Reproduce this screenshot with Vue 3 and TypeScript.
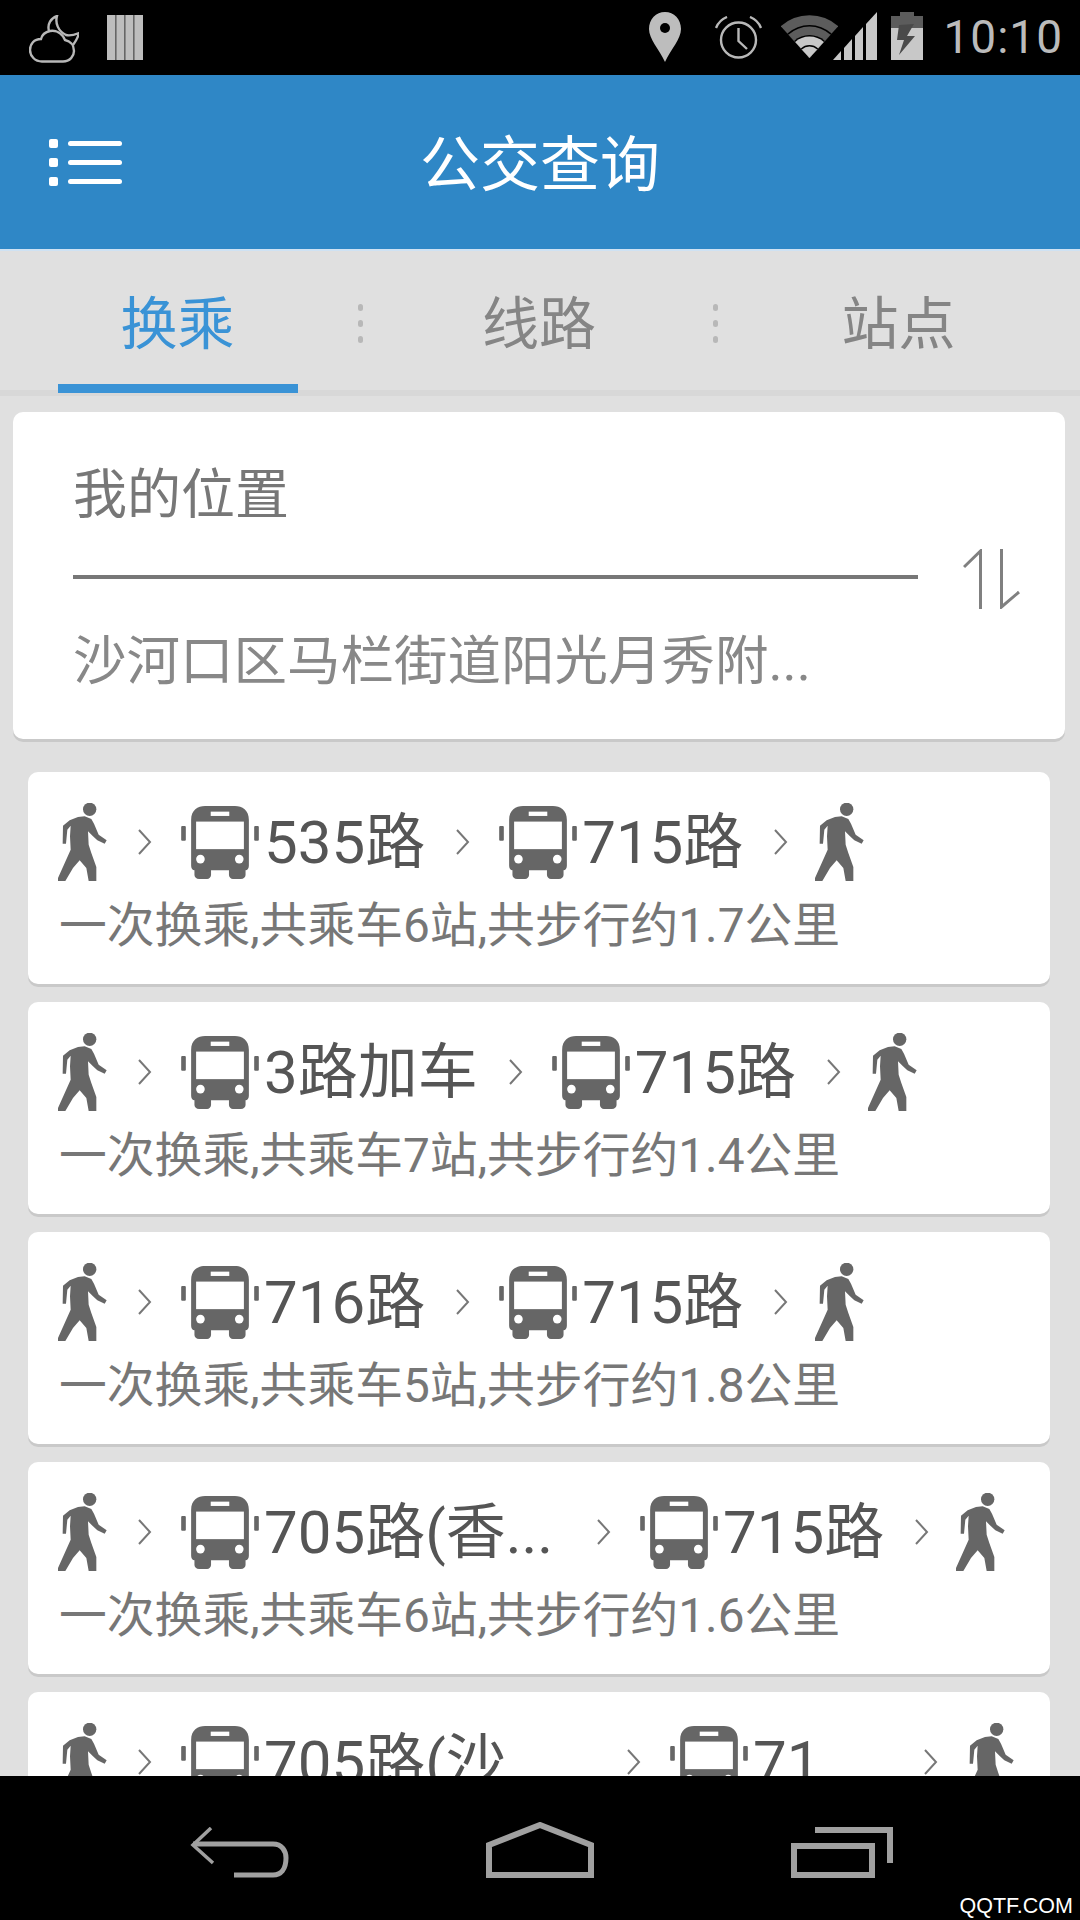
<script setup lang="ts">
type Step = { name: string; width?: number };
type Route = { steps: Step[]; info: string };

const tabs = ['换乘', '线路', '站点'];

const routes: Route[] = [
  { steps: [{ name: '535路' }, { name: '715路' }], info: '一次换乘,共乘车6站,共步行约1.7公里' },
  { steps: [{ name: '3路加车' }, { name: '715路' }], info: '一次换乘,共乘车7站,共步行约1.4公里' },
  { steps: [{ name: '716路' }, { name: '715路' }], info: '一次换乘,共乘车5站,共步行约1.8公里' },
  { steps: [{ name: '705路(香...', width: 302 }, { name: '715路' }], info: '一次换乘,共乘车6站,共步行约1.6公里' },
  { steps: [{ name: '705路(沙', width: 332 }, { name: '71', width: 140 }], info: '一次换乘,共乘车6站,共步行约1.6公里' },
];
</script>

<template>
  <div class="screen">
    <div class="status">
      <svg class="st-cloud" width="50" height="48" viewBox="0 0 50 48" fill="none" stroke="#b8b8b8" stroke-width="2.4">
        <path d="M13 46.5H34C41 46.5 45 41 45 36C45 30 41 26 36 25C33 18 27 15 21 16C16 17 13 20 12 24C5 24 1 29 1 35C1 41 6 46.5 13 46.5Z" />
        <path d="M20 16C18 9 22 3 28 1C26 8 29 16 37 20C41 21 45 20 50 18C49 23 47 26 44 30" />
      </svg>
      <svg class="st-bars" width="36" height="45" viewBox="0 0 36 45">
        <rect width="36" height="45" fill="#bdbdbd" />
        <rect x="8" width="1.6" height="45" fill="#666" />
        <rect x="17" width="1.6" height="45" fill="#666" />
        <rect x="26" width="1.6" height="45" fill="#666" />
      </svg>
      <span class="st-fill"></span>
      <svg class="st-pin" width="32" height="50" viewBox="0 0 32 50">
        <path d="M16 0C7 0 0 7 0 17C0 27 10 37 16 50C22 37 32 27 32 17C32 7 25 0 16 0Z" fill="#bdbdbd" />
        <circle cx="16" cy="16" r="5" fill="#000" />
      </svg>
      <svg class="st-alarm" width="47" height="43" viewBox="0 0 47 43" fill="none" stroke="#b8b8b8" stroke-width="2.4">
        <circle cx="23.5" cy="24" r="17.5" />
        <path d="M23.5 12V25L32 33" />
        <path d="M1 12C3 7 7 3 12 1M46 12C44 7 40 3 35 1" />
      </svg>
      <svg class="st-wifi" width="57" height="43" viewBox="0 0 57 43">
        <path d="M28.5 43L-.3 11.2A43 43 0 0 1 57.3 11.2Z" fill="#5c5c5c" />
        <path d="M28.5 43L6.4 18.6A33 33 0 0 1 50.6 18.6Z" fill="#000" />
        <path d="M28.5 43L7.4 19.7A31.5 31.5 0 0 1 49.6 19.7Z" fill="#5c5c5c" />
        <path d="M28.5 43L13.1 26A23 23 0 0 1 43.9 26Z" fill="#000" />
        <path d="M28.5 43L14.1 27.1A21.5 21.5 0 0 1 42.9 27.1Z" fill="#c8c8c8" />
        <path d="M28.5 43L19.8 33.4A13 13 0 0 1 37.2 33.4Z" fill="#000" />
        <path d="M28.5 43L20.8 34.5A11.5 11.5 0 0 1 36.2 34.5Z" fill="#c8c8c8" />
      </svg>
      <svg class="st-signal" width="44" height="48" viewBox="0 0 44 48" fill="#c8c8c8">
        <polygon points="0,48 8,39 8,48" />
        <polygon points="11,48 11,36 19,27 19,48" />
        <polygon points="22,48 22,24 30,15 30,48" />
        <polygon points="33,48 33,12 44,0 44,48" />
      </svg>
      <svg class="st-batt" width="32" height="48" viewBox="0 0 32 48">
        <rect x="9" width="14" height="5" fill="#5c5c5c" />
        <rect y="4" width="32" height="12" fill="#5c5c5c" />
        <rect y="16" width="32" height="32" fill="#c8c8c8" />
        <polygon points="8,13 23,12 16,24 24,24 8,43 13,28 6,28" fill="#4a4a4a" />
      </svg>
      <span class="st-time">10:10</span>
    </div>

    <div class="appbar">
      <div class="menu">
        <div class="menu-row" v-for="n in 3" :key="n"><i></i><b></b></div>
      </div>
      <h1>公交查询</h1>
    </div>

    <div class="tabs">
      <template v-for="(tab, i) in tabs" :key="tab">
        <div class="tab" :class="{ active: i === 0 }">
          <span>{{ tab }}</span>
          <em></em>
        </div>
        <div class="sep" v-if="i < 2"><i></i><i></i><i></i></div>
      </template>
    </div>

    <div class="content">
      <div class="search">
        <div class="fields">
          <div class="field first">我的位置</div>
          <div class="field">沙河口区马栏街道阳光月秀附...</div>
        </div>
        <svg class="swap" width="57" height="60" viewBox="0 0 57 60" fill="none" stroke="#808080" stroke-width="3">
          <path d="M1 18L17.5 2V60" />
          <path d="M38.500 0V58L56 43" />
        </svg>
      </div>

      <div class="route" v-for="(route, r) in routes" :key="r">
        <div class="line">
          <svg class="walk" width="49" height="78" viewBox="0 0 147 234" fill="#666">
            <circle cx="95" cy="19" r="20" />
            <path d="M35 52L15 68L14 122H24L28 80L38 68L36 100L38 140L0 225V234H22L45 195L65 172L85 195L92 234H115V192L100 150L92 125L90 85L105 100L118 112L140 122L146 112L122 95L108 62L100 48L80 40L60 42Z" />
          </svg>
          <template v-for="(step, s) in route.steps" :key="s">
            <svg class="chev" width="15" height="32" viewBox="0 0 15 32" fill="none" stroke="#777" stroke-width="2"><path d="M2 4L13 16L2 28" /></svg>
            <svg class="bus" width="78" height="73" viewBox="0 0 234 220" fill="#666">
              <rect y="60" width="14" height="45" rx="3" />
              <rect x="220" y="60" width="14" height="45" rx="3" />
              <path d="M30 42C30 12 50 0 72 0H162C184 0 204 12 204 42V180C204 188 200 194 194 194V208C194 215 188 220 180 220H156C150 220 144 215 144 208V194H90V208C90 215 84 220 78 220H54C46 220 40 215 40 208V194C34 194 30 188 30 180Z" />
              <rect x="89" y="17" width="56" height="13" fill="#fff" />
              <rect x="45" y="47" width="144" height="83" fill="#fff" />
              <circle cx="58" cy="160" r="13" fill="#fff" />
              <circle cx="175" cy="160" r="13" fill="#fff" />
            </svg>
            <span class="name" :style="step.width ? { width: step.width + 'px' } : undefined">{{ step.name }}</span>
          </template>
          <svg class="chev" width="15" height="32" viewBox="0 0 15 32" fill="none" stroke="#777" stroke-width="2"><path d="M2 4L13 16L2 28" /></svg>
          <svg class="walk end" width="49" height="78" viewBox="0 0 147 234" fill="#666">
            <circle cx="95" cy="19" r="20" />
            <path d="M35 52L15 68L14 122H24L28 80L38 68L36 100L38 140L0 225V234H22L45 195L65 172L85 195L92 234H115V192L100 150L92 125L90 85L105 100L118 112L140 122L146 112L122 95L108 62L100 48L80 40L60 42Z" />
          </svg>
        </div>
        <div class="info">{{ route.info }}</div>
      </div>
    </div>

    <div class="nav">
      <svg width="100" height="51" viewBox="0 0 100 51" fill="none" stroke="#a0a0a0" stroke-width="5">
        <path d="M22 1L4 18L24 36" stroke-width="3.500" />
        <path d="M4 17H84C93 17 97 24 97 31C97 42 92 48 84 48H45" />
      </svg>
      <svg width="108" height="56" viewBox="0 0 108 56" fill="none" stroke="#a0a0a0" stroke-width="6">
        <path d="M3 53V23L54 3L105 23V53Z" />
      </svg>
      <svg width="102" height="51" viewBox="0 0 102 51" fill="none" stroke="#a0a0a0" stroke-width="6">
        <rect x="3" y="19" width="78" height="29" />
        <path d="M24 3H99V36" />
      </svg>
      <span class="mark">QQTF.COM</span>
    </div>
  </div>
</template>

<style scoped>
.screen {
  width: 1080px;
  height: 1920px;
  display: flex;
  flex-direction: column;
  background: #e0e0e0;
  font-family: Roboto, "Noto Sans CJK SC", sans-serif;
  overflow: hidden;
}

.status {
  height: 75px;
  flex: none;
  background: #000;
  display: flex;
  align-items: flex-start;
  padding-left: 29px;
  box-sizing: border-box;
}

.st-cloud { margin-top: 15px; }
.st-bars { margin: 15px 0 0 28px; }
.st-fill { flex: 1; }
.st-pin { margin-top: 12px; }
.st-alarm { margin: 16px 0 0 34px; }
.st-wifi { margin: 15px 0 0 19px; }
.st-signal { margin: 12px 0 0 -5px; }
.st-batt { margin: 12px 0 0 14px; }

.st-time {
  margin: 9px 17px 0 20px;
  font-size: 46px;
  line-height: 56px;
  color: #bbb;
  letter-spacing: 1px;
}

.appbar {
  height: 174px;
  flex: none;
  background: #2f87c6;
  display: flex;
  align-items: center;
  justify-content: center;
  position: relative;
}

.appbar h1 {
  margin: -6px 0 0;
  font-size: 60px;
  font-weight: 400;
  color: #fff;
}

.menu {
  position: absolute;
  left: 49px;
  top: 64px;
  display: flex;
  flex-direction: column;
  gap: 10px;
}

.menu-row {
  height: 9px;
  display: flex;
  align-items: center;
  gap: 10px;
}

.menu-row i {
  width: 9px;
  height: 9px;
  border-radius: 2px;
  background: #fff;
}

.menu-row b {
  width: 54px;
  height: 5px;
  border-radius: 3px;
  background: #fff;
}

.tabs {
  height: 147px;
  flex: none;
  display: grid;
  grid-template-columns: 355px 10px 348px 4px 1fr;
  box-shadow: inset 0 -6px 0 #d8d8d8, inset 0 2px 0 #cfe2f3;
}

.tab {
  height: 144px;
  display: flex;
  flex-direction: column;
  align-items: center;
  font-size: 57px;
  color: #858585;
}

.tab span {
  line-height: 70px;
  margin-top: 41px;
}

.tab em {
  display: block;
  width: 240px;
  height: 9px;
  margin-top: auto;
}

.tab.active { color: #3a93d6; }
.tab.active em { background: #3a93d6; }

.sep {
  display: flex;
  flex-direction: column;
  align-items: center;
  gap: 9px;
  padding-top: 55px;
}

.sep i {
  width: 5px;
  height: 7px;
  border-radius: 3px;
  background: #b8b8b8;
}

.content {
  flex: 1;
  min-height: 0;
  overflow: hidden;
  padding-top: 16px;
}

.search {
  height: 327px;
  margin: 0 15px 33px 13px;
  background: #fff;
  border-radius: 10px;
  box-shadow: 0 3px 0 #c9c9c9;
  display: flex;
  align-items: center;
}

.fields {
  width: 845px;
  margin-left: 60px;
}

.field {
  font-size: 53.5px;
  color: #888;
  height: 161px;
  line-height: 80px;
  padding-top: 43px;
  box-sizing: border-box;
}

.field.first {
  font-size: 54px;
  color: #777;
  height: 168px;
  padding-top: 45px;
  border-bottom: 4px solid #777;
}

.swap { margin-left: 45px; margin-top: 6px; }

.route {
  height: 212px;
  margin: 0 30px 18px 28px;
  background: #fff;
  border-radius: 10px;
  box-shadow: 0 3px 0 #c9c9c9;
  padding: 30px 0 0 30px;
  box-sizing: border-box;
}

.line {
  display: flex;
  align-items: center;
  height: 80px;
}

.chev { margin-left: 30px; flex: none; }
.bus { margin-left: 29px; flex: none; }
.walk { flex: none; }
.walk.end { margin-left: 27px; }

.name {
  margin-left: 5px;
  font-size: 60px;
  line-height: 84px;
  padding-top: 2px;
  color: #555;
  white-space: nowrap;
  overflow: hidden;
}

.info {
  font-size: 47.8px;
  line-height: 60px;
  color: #777;
  margin: 14px 0 0 1px;
  white-space: nowrap;
}

.nav {
  height: 144px;
  flex: none;
  background: #000;
  display: flex;
  align-items: flex-end;
  gap: 197px;
  padding: 0 0 42px 189px;
  box-sizing: border-box;
  position: relative;
}

.mark {
  position: absolute;
  right: 7px;
  bottom: 2px;
  font-family: "Liberation Sans", sans-serif;
  font-size: 21.5px;
  line-height: 24px;
  color: #fff;
}
</style>

<style>
body { background: #000; }
</style>
